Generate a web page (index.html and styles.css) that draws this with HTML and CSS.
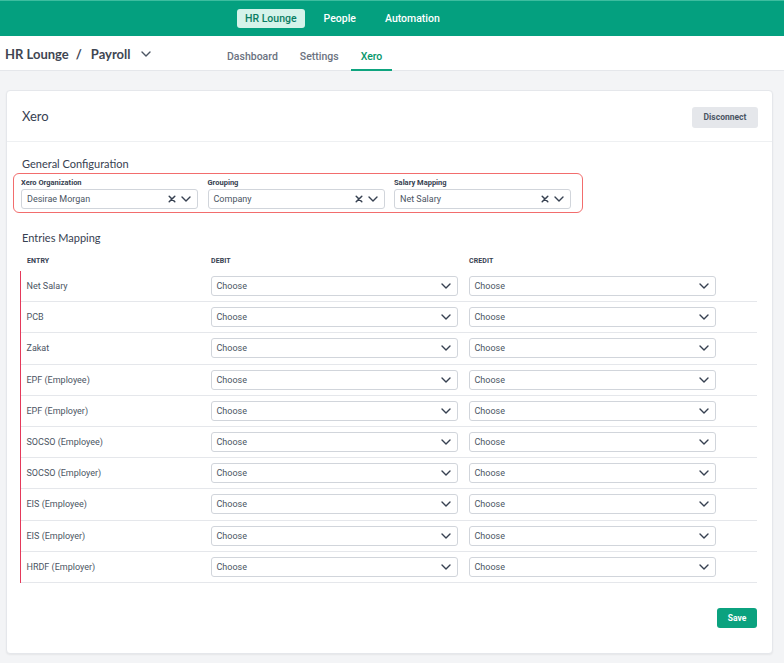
FILE: index.html
```html
<!DOCTYPE html>
<html>
<head>
<meta charset="utf-8">
<link rel="stylesheet" href="styles.css">
</head>
<body>
<header class="topbar">
  <nav class="topnav">
    <a class="topnav-item active">HR Lounge</a>
    <a class="topnav-item">People</a>
    <a class="topnav-item">Automation</a>
  </nav>
</header>
<div class="subbar">
  <div class="crumbs">
    <span>HR Lounge</span><span class="slash">/</span><span>Payroll</span>
    <svg class="crumb-chev" width="10" height="6" viewBox="0 0 10 6"><path d="M1 1l4 4 4-4" fill="none" stroke="#4b5563" stroke-width="1.4" stroke-linecap="round" stroke-linejoin="round"/></svg>
  </div>
  <div class="tabs">
    <a class="tab">Dashboard</a>
    <a class="tab">Settings</a>
    <a class="tab active">Xero</a>
  </div>
</div>
<main class="main">
  <section class="card">
    <div class="card-head">
      <h1 class="card-title">Xero</h1>
      <button class="btn-gray">Disconnect</button>
    </div>
    <div class="card-body">
      <h2 class="section-title">General Configuration</h2>
      <div class="config-box">
        <div class="field">
          <label class="field-label">Xero Organization</label>
          <div class="select"><span class="select-text">Desirae Morgan</span>
            <svg class="ico-x" width="8" height="8" viewBox="0 0 8 8"><path d="M1.2 1.2l5.6 5.6M6.8 1.2L1.2 6.8" stroke="#374151" stroke-width="1.5" stroke-linecap="round"/></svg>
            <svg class="ico-chev" width="10" height="6" viewBox="0 0 10 6"><path d="M1 1l4 4 4-4" fill="none" stroke="#374151" stroke-width="1.4" stroke-linecap="round" stroke-linejoin="round"/></svg>
          </div>
        </div>
        <div class="field">
          <label class="field-label">Grouping</label>
          <div class="select"><span class="select-text">Company</span>
            <svg class="ico-x" width="8" height="8" viewBox="0 0 8 8"><path d="M1.2 1.2l5.6 5.6M6.8 1.2L1.2 6.8" stroke="#374151" stroke-width="1.5" stroke-linecap="round"/></svg>
            <svg class="ico-chev" width="10" height="6" viewBox="0 0 10 6"><path d="M1 1l4 4 4-4" fill="none" stroke="#374151" stroke-width="1.4" stroke-linecap="round" stroke-linejoin="round"/></svg>
          </div>
        </div>
        <div class="field">
          <label class="field-label">Salary Mapping</label>
          <div class="select"><span class="select-text">Net Salary</span>
            <svg class="ico-x" width="8" height="8" viewBox="0 0 8 8"><path d="M1.2 1.2l5.6 5.6M6.8 1.2L1.2 6.8" stroke="#374151" stroke-width="1.5" stroke-linecap="round"/></svg>
            <svg class="ico-chev" width="10" height="6" viewBox="0 0 10 6"><path d="M1 1l4 4 4-4" fill="none" stroke="#374151" stroke-width="1.4" stroke-linecap="round" stroke-linejoin="round"/></svg>
          </div>
        </div>
      </div>

      <h2 class="section-title entries">Entries Mapping</h2>
      <div class="table">
        <div class="thead">
          <div class="th">Entry</div>
          <div class="th">Debit</div>
          <div class="th">Credit</div>
        </div>
        <div class="tbody" id="tbody"></div>
      </div>
      <div class="footer">
        <button class="btn-green">Save</button>
      </div>
    </div>
  </section>
</main>
<script>
  var entries = ["Net Salary","PCB","Zakat","EPF (Employee)","EPF (Employer)","SOCSO (Employee)","SOCSO (Employer)","EIS (Employee)","EIS (Employer)","HRDF (Employer)"];
  var chev = '<svg class="ico-chev" width="10" height="6" viewBox="0 0 10 6"><path d="M1 1l4 4 4-4" fill="none" stroke="#374151" stroke-width="1.4" stroke-linecap="round" stroke-linejoin="round"/></svg>';
  var html = "";
  entries.forEach(function(e){
    html += '<div class="tr"><div class="td-entry">' + e + '</div>' +
      '<div class="td"><div class="select row-select"><span class="select-text">Choose</span>' + chev + '</div></div>' +
      '<div class="td"><div class="select row-select"><span class="select-text">Choose</span>' + chev + '</div></div></div>';
  });
  document.getElementById("tbody").innerHTML = html;
</script>
</body>
</html>
```
FILE: styles.css
```css
* { box-sizing: border-box; }
html, body { margin: 0; padding: 0; }
body {
  background: #f3f4f6;
  font-family: Roboto, "Liberation Sans", sans-serif;
  color: #374151;
  width: 784px;
  height: 663px;
  overflow: hidden;
}

.topbar {
  height: 36px;
  background: #04a07f;
  border-top: 1px solid #3dbd9f;
  display: flex;
  align-items: center;
  padding-left: 237px;
}
.topnav { display: flex; align-items: center; gap: 2px; }
.topnav-item {
  font-size: 10.5px;
  font-weight: 500;
  color: #ffffff;
  padding: 4px 8px;
  border-radius: 3px;
  line-height: 11px;
  margin-right: 11px;
}
.topnav-item.active {
  background: #d5f3ea;
  color: #0a7d63;
  margin-right: 9px;
}

.subbar {
  height: 35px;
  background: #ffffff;
  border-bottom: 1px solid #e5e7eb;
  display: flex;
  align-items: stretch;
}
.crumbs {
  width: 217px;
  padding-left: 5px;
  display: flex;
  align-items: center;
  font-family: Lato, "Open Sans", sans-serif;
  font-size: 13px;
  font-weight: 700;
  color: #3f4652;
  padding-top: 1px;
}
.slash { margin: 0 9px 0 7px; }
.crumb-chev { margin-left: 10px; }
.tabs { display: flex; align-items: stretch; gap: 2px; }
.tab {
  font-size: 10.5px;
  font-weight: 500;
  color: #6b7280;
  padding: 0 10px;
  display: flex;
  align-items: center;
  border-bottom: 2px solid transparent;
  margin-bottom: -1px;
  padding-top: 7px;
}
.tab.active { color: #059669; border-bottom-color: #0ea47f; }

.main { padding: 19px 11px 0 6px; }
.card {
  background: #ffffff;
  border: 1px solid #e5e7eb;
  border-radius: 4px;
  box-shadow: 0 1px 2px rgba(0,0,0,0.06);
  height: 564px;
}
.card-head {
  height: 51px;
  border-bottom: 1px solid #eef0f2;
  display: flex;
  align-items: center;
  justify-content: space-between;
  padding: 0 14px 0 15px;
}
.card-title {
  margin: 0;
  font-family: Lato, "Open Sans", sans-serif;
  font-weight: 400;
  font-size: 13px;
  color: #374151;
}
.btn-gray {
  border: none;
  background: #e5e7eb;
  color: #4b5563;
  font-family: Roboto, sans-serif;
  font-weight: 700;
  font-size: 8.5px;
  height: 21px;
  width: 66px;
  border-radius: 3px;
  padding: 0;
  margin-top: 2px;
}

.card-body { padding: 15px 15px 0 15px; }
.section-title {
  margin: 0;
  font-family: Lato, "Open Sans", sans-serif;
  font-weight: 400;
  font-size: 11px;
  line-height: 14px;
  color: #374151;
}
.config-box {
  margin: 2px 0 0 -9px;
  width: 570px;
  border: 1px solid #f26d6d;
  border-radius: 6px;
  padding: 3px 9px 3px 7px;
  display: grid;
  grid-template-columns: 177px 177px 177px;
  column-gap: 9.5px;
}
.field { display: flex; flex-direction: column; }
.field-label {
  font-size: 7.5px;
  font-weight: 700;
  color: #374151;
  line-height: 11px;
  height: 12px;
}
.select {
  height: 20px;
  border: 1px solid #d1d5db;
  border-radius: 3px;
  background: #fff;
  display: flex;
  align-items: center;
  padding: 0 6px 0 5px;
}
.select-text {
  flex: 1;
  font-size: 9px;
  color: #4b5563;
  white-space: nowrap;
}
.ico-x { margin-right: 5px; }

.section-title.entries { margin-top: 18px; }

.table { margin-left: -2px; margin-top: 6px; }
.thead {
  display: grid;
  grid-template-columns: 191px 258px 1fr;
  height: 20px;
  align-items: center;
}
.th {
  font-size: 7px;
  font-weight: 700;
  text-transform: uppercase;
  color: #374151;
  letter-spacing: 0.1px;
}
.th:first-child { padding-left: 7px; }
.tbody { border-left: 1.5px solid #e5395b; }
.tr {
  display: grid;
  grid-template-columns: 189.5px 258px 247px;
  height: 31.2px;
  border-bottom: 1px solid #e5e7eb;
  align-items: center;
}
.td-entry {
  font-size: 9px;
  color: #4b5563;
  padding-left: 5.5px;
}
.td { display: flex; }
.row-select { width: 247px; }

.footer {
  display: flex;
  justify-content: flex-end;
  margin-top: 25px;
}
.btn-green {
  border: none;
  background: #0ba27f;
  color: #ffffff;
  font-family: Roboto, sans-serif;
  font-weight: 700;
  font-size: 8.5px;
  width: 40px;
  height: 20px;
  border-radius: 3px;
  padding: 0;
}
```
